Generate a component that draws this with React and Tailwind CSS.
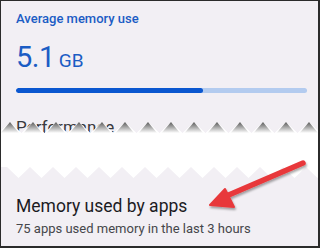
const teeth = Array.from({ length: 15 }, (_, i) => 10 + i * 23)

function TornBand() {
  // white strip between two torn edges; top teeth cast shadow into the valleys
  let white = 'M-2,11 '
  teeth.forEach((x) => {
    white += `L${x - 11.5},11 L${x},0 L${x + 11.5},11 `
  })
  white += 'L322,11 L322,45 '
  ;[...teeth].reverse().forEach((x) => {
    white += `L${x + 8.5},56 L${x - 3},45 `
  })
  white += 'L-2,45 Z'
  return (
    <svg width="322" height="58" viewBox="0 0 322 58" className="block">
      <defs>
        <linearGradient id="sh" x1="0" y1="0" x2="0" y2="1">
          <stop offset="0" stopColor="#5a5a5a" />
          <stop offset="0.55" stopColor="#b4b4b4" />
          <stop offset="1" stopColor="#ffffff" />
        </linearGradient>
        <linearGradient id="sh2" x1="0" y1="0" x2="0" y2="1">
          <stop offset="0" stopColor="#ffffff" />
          <stop offset="1" stopColor="#e4e2e6" />
        </linearGradient>
      </defs>
      <path d={white} fill="#ffffff" />
      {teeth.map((x) => (
        <polygon key={x} points={`${x},0 ${x + 9},11 ${x - 9.5},11`} fill="url(#sh)" />
      ))}
    </svg>
  )
}

export default function App() {
  return (
    <div
      className="relative w-[320px] h-[248px] bg-[#f2eff4] border-t border-l border-r-2 border-b-2 border-[#2b2b2b] overflow-hidden"
      style={{ fontFamily: 'Roboto, "Liberation Sans", sans-serif' }}
    >
      <div className="pl-[15px] pr-[12px]">
        <div className="pt-[8px] text-[13px] leading-[20px] font-medium text-[#1b5cc4]">Average memory use</div>
        <div className="mt-[12px] flex items-baseline text-[#1b5cc4] leading-[32px]">
          <span className="text-[29px] tracking-[-0.5px]">5.1</span>
          <span className="ml-[4px] text-[19px]">GB</span>
        </div>
        <div className="mt-[11px] flex h-[5px] w-[291px] rounded-full overflow-hidden bg-[#b3cbef]">
          <div className="w-[187px] h-full rounded-full bg-[#0b57d0]" />
        </div>
      </div>
      <div className="relative mt-[8px] h-[93px]">
        <div className="pl-[15px] pt-[14px] text-[17px] leading-[24px] text-[#3a3a3e]">Performance</div>
        <div className="absolute left-[-1px] top-[21px]">
          <TornBand />
        </div>
      </div>
      <div className="pl-[15px]">
        <div className="text-[17.5px] leading-[24px] text-[#1c1b1f]">Memory used by apps</div>
        <div className="mt-[2px] text-[13px] leading-[18px] text-[#45464a]">75 apps used memory in the last 3 hours</div>
      </div>
      <svg width="120" height="64" viewBox="0 0 120 64" className="absolute left-[193px] top-[149px]">
        <defs>
          <filter id="ds" x="-20%" y="-40%" width="140%" height="180%">
            <feDropShadow dx="1" dy="2" stdDeviation="1.2" floodColor="#000" floodOpacity="0.35" />
          </filter>
        </defs>
        <g filter="url(#ds)" fill="#e8383b" stroke="#e8383b" strokeLinecap="round" strokeLinejoin="round">
          <line x1="109" y1="13" x2="30" y2="47" strokeWidth="5.5" />
          <polygon points="16,55 31,39 40,57" strokeWidth="2" />
        </g>
      </svg>
    </div>
  )
}
